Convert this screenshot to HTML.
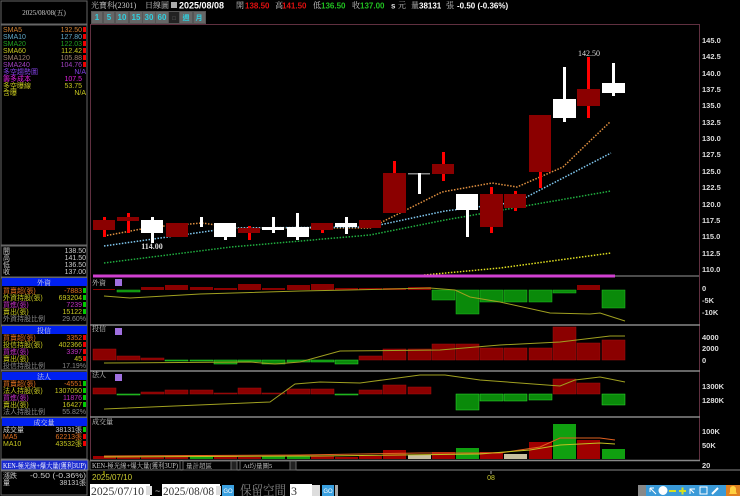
<!DOCTYPE html>
<html><head><meta charset="utf-8"><style>
html,body{margin:0;padding:0;background:#000;width:740px;height:496px;overflow:hidden}
svg{display:block}
text{font-family:"Liberation Sans","Noto Sans CJK TC",sans-serif}
.s{font-family:"Liberation Serif","Noto Serif CJK SC",serif}
</style></head><body>
<svg width="740" height="496" viewBox="0 0 740 496" xmlns="http://www.w3.org/2000/svg">
<rect width="740" height="496" fill="#000"/>
<!-- left panel -->
<rect x="1" y="1" width="86" height="23" fill="#000" stroke="#666"/>
<text x="44" y="15" font-size="7" fill="#ccc" text-anchor="middle" class="s">2025/08/08(五)</text>
<rect x="1" y="25" width="86" height="220" fill="#000" stroke="#666"/>
<g font-size="7" class="s">
<text x="3" y="32" fill="#d08030">SMA5</text><text x="82" y="32" fill="#d08030" text-anchor="end">132.50</text>
<text x="3" y="39" fill="#60a8c8">SMA10</text><text x="82" y="39" fill="#60a8c8" text-anchor="end">127.80</text>
<text x="3" y="46" fill="#20a020">SMA20</text><text x="82" y="46" fill="#20a020" text-anchor="end">122.03</text>
<text x="3" y="53" fill="#c8c820">SMA60</text><text x="82" y="53" fill="#c8c820" text-anchor="end">112.42</text>
<text x="3" y="60" fill="#a08070">SMA120</text><text x="82" y="60" fill="#a08070" text-anchor="end">105.88</text>
<text x="3" y="67" fill="#a040c0">SMA240</text><text x="82" y="67" fill="#a040c0" text-anchor="end">104.76</text>
<text x="3" y="74" fill="#8040e0">多空趨勢圖</text><text x="86" y="74" fill="#8040e0" text-anchor="end">N/A</text>
<text x="3" y="81" fill="#e020e0">籌多成本</text><text x="82" y="81" fill="#e020e0" text-anchor="end">107.5</text>
<text x="3" y="88" fill="#c8c820">多空曝線</text><text x="82" y="88" fill="#c8c820" text-anchor="end">53.75</text>
<text x="3" y="95" fill="#c8c820">含曝</text><text x="86" y="95" fill="#c8c820" text-anchor="end">N/A</text>
</g>
<g fill="#e00"><rect x="83" y="27" width="3" height="5"/><rect x="83" y="34" width="3" height="5"/><rect x="83" y="41" width="3" height="5"/><rect x="83" y="48" width="3" height="5"/><rect x="83" y="55" width="3" height="5"/><rect x="83" y="62" width="3" height="5"/></g>
<rect x="1" y="246" width="86" height="31" fill="#000" stroke="#666"/>
<g font-size="7" class="s" fill="#ccc">
<text x="3" y="253">開</text><text x="86" y="253" text-anchor="end">138.50</text>
<text x="3" y="260">高</text><text x="86" y="260" text-anchor="end">141.50</text>
<text x="3" y="267">低</text><text x="86" y="267" text-anchor="end">136.50</text>
<text x="3" y="274">收</text><text x="86" y="274" text-anchor="end">137.00</text>
</g>
<!-- 外資 -->
<rect x="1" y="278" width="86" height="47" fill="#000" stroke="#666"/>
<rect x="2" y="278" width="85" height="8" fill="#0020f0"/>
<text x="44" y="285" font-size="7" fill="#ddd" text-anchor="middle" class="s">外資</text>
<g font-size="7" class="s">
<text x="3" y="293" fill="#e07020">買賣超(張)</text><text x="82" y="293" fill="#e07020" text-anchor="end">-7883</text>
<text x="3" y="300" fill="#c8c820">外資持股(張)</text><text x="82" y="300" fill="#c8c820" text-anchor="end">693204</text>
<text x="3" y="307" fill="#c030c0">買進(張)</text><text x="82" y="307" fill="#c030c0" text-anchor="end">7239</text>
<text x="3" y="314" fill="#c8c820">賣出(張)</text><text x="82" y="314" fill="#c8c820" text-anchor="end">15122</text>
<text x="3" y="321" fill="#888">外資持股比例</text><text x="86" y="321" fill="#888" text-anchor="end">29.60%</text>
</g>
<!-- 投信 -->
<rect x="1" y="326" width="86" height="44" fill="#000" stroke="#666"/>
<rect x="2" y="326" width="85" height="8" fill="#0020f0"/>
<text x="44" y="333" font-size="7" fill="#ddd" text-anchor="middle" class="s">投信</text>
<g font-size="7" class="s">
<text x="3" y="340" fill="#e07020">買賣超(張)</text><text x="82" y="340" fill="#e07020" text-anchor="end">3352</text>
<text x="3" y="347" fill="#c8c820">投信持股(張)</text><text x="82" y="347" fill="#c8c820" text-anchor="end">402366</text>
<text x="3" y="354" fill="#c030c0">買進(張)</text><text x="82" y="354" fill="#c030c0" text-anchor="end">3397</text>
<text x="3" y="361" fill="#c8c820">賣出(張)</text><text x="82" y="361" fill="#c8c820" text-anchor="end">45</text>
<text x="3" y="368" fill="#888">投信持股比例</text><text x="86" y="368" fill="#888" text-anchor="end">17.19%</text>
</g>
<!-- 法人 -->
<rect x="1" y="371" width="86" height="46" fill="#000" stroke="#666"/>
<rect x="2" y="372" width="85" height="8" fill="#0020f0"/>
<text x="44" y="379" font-size="7" fill="#ddd" text-anchor="middle" class="s">法人</text>
<g font-size="7" class="s">
<text x="3" y="386" fill="#e07020">買賣超(張)</text><text x="82" y="386" fill="#e07020" text-anchor="end">-4551</text>
<text x="3" y="393" fill="#c8c820">法人持股(張)</text><text x="82" y="393" fill="#c8c820" text-anchor="end">1307050</text>
<text x="3" y="400" fill="#c030c0">買進(張)</text><text x="82" y="400" fill="#c030c0" text-anchor="end">11876</text>
<text x="3" y="407" fill="#c8c820">賣出(張)</text><text x="82" y="407" fill="#c8c820" text-anchor="end">16427</text>
<text x="3" y="414" fill="#888">法人持股比例</text><text x="86" y="414" fill="#888" text-anchor="end">55.82%</text>
</g>
<!-- 成交量 -->
<rect x="1" y="418" width="86" height="41" fill="#000" stroke="#666"/>
<rect x="2" y="418" width="85" height="8" fill="#0020f0"/>
<text x="44" y="425" font-size="7" fill="#ddd" text-anchor="middle" class="s">成交量</text>
<g font-size="7" class="s">
<text x="3" y="432" fill="#ccc">成交量</text><text x="82" y="432" fill="#ccc" text-anchor="end">38131張</text>
<text x="3" y="439" fill="#e07020">MA5</text><text x="82" y="439" fill="#e07020" text-anchor="end">62213張</text>
<text x="3" y="446" fill="#c8c820">MA10</text><text x="82" y="446" fill="#c8c820" text-anchor="end">43532張</text>
</g>
<g fill="#0c0"><rect x="83" y="288" width="3" height="5"/><rect x="83" y="295" width="3" height="5"/><rect x="83" y="302" width="3" height="5"/><rect x="83" y="309" width="3" height="5"/><rect x="83" y="381" width="3" height="5"/><rect x="83" y="388" width="3" height="5"/><rect x="83" y="395" width="3" height="5"/><rect x="83" y="402" width="3" height="5"/><rect x="83" y="427" width="3" height="5"/></g>
<g fill="#e00"><rect x="83" y="335" width="3" height="5"/><rect x="83" y="342" width="3" height="5"/><rect x="83" y="349" width="3" height="5"/><rect x="83" y="356" width="3" height="5"/><rect x="83" y="434" width="3" height="5"/><rect x="83" y="441" width="3" height="5"/></g>
<rect x="1" y="460" width="87" height="10" fill="#1a2ad0" stroke="#888"/>
<text x="3" y="468" font-size="7" fill="#fff" class="s" textLength="83" lengthAdjust="spacingAndGlyphs">KEN-極光線+爆大量(獲利3UP)</text>
<rect x="1" y="471" width="86" height="24" fill="#000" stroke="#666"/>
<g font-size="7" class="s" fill="#ccc">
<text x="3" y="478">漲跌</text><text x="86" y="478" text-anchor="end" textLength="56" lengthAdjust="spacingAndGlyphs">-0.50 (-0.36%)</text>
<text x="3" y="485">量</text><text x="86" y="485" text-anchor="end">38131張</text>
</g>

<!-- top bar -->
<g font-size="8">
<text x="91" y="8" fill="#ccc" class="s">光寶科(2301)</text>
<text x="145" y="8" fill="#ccc" class="s">日線圖</text>
<rect x="171" y="2" width="6" height="6" fill="#aaa"/>
<text x="179" y="8.5" fill="#fff" font-weight="bold" font-size="9">2025/08/08</text>
<text x="236" y="8" fill="#ccc" class="s">開</text><text x="245" y="8.5" fill="#e01010" font-weight="bold">138.50</text>
<text x="275" y="8" fill="#ccc" class="s">高</text><text x="282" y="8.5" fill="#e01010" font-weight="bold">141.50</text>
<text x="313" y="8" fill="#ccc" class="s">低</text><text x="321" y="8.5" fill="#20c020" font-weight="bold">136.50</text>
<text x="352" y="8" fill="#ccc" class="s">收</text><text x="360" y="8.5" fill="#20c020" font-weight="bold">137.00</text>
<text x="391" y="8.5" fill="#ddd" font-weight="bold">s</text><text x="398" y="8" fill="#ccc" class="s">元</text>
<text x="411" y="8" fill="#ccc" class="s">量</text><text x="419" y="8.5" fill="#fff" font-weight="bold">38131</text>
<text x="446" y="8" fill="#ccc" class="s">張</text>
<text x="457" y="8.5" fill="#fff" font-weight="bold">-0.50 (-0.36%)</text>
</g>
<rect x="91" y="11" width="115" height="13" fill="#555"/>
<g font-size="8" fill="#30d0e0" font-weight="bold" text-anchor="middle">
<rect x="92" y="12" width="10" height="11" fill="#666"/><text x="97" y="20">1</text>
<rect x="104" y="12" width="10" height="11" fill="#666"/><text x="109" y="20">5</text>
<rect x="116" y="12" width="12" height="11" fill="#666"/><text x="122" y="20">10</text>
<rect x="130" y="12" width="12" height="11" fill="#666"/><text x="136" y="20">15</text>
<rect x="143" y="12" width="12" height="11" fill="#666"/><text x="149" y="20">30</text>
<rect x="156" y="12" width="12" height="11" fill="#666"/><text x="162" y="20">60</text>
<rect x="169" y="12" width="10" height="11" fill="#222"/><text x="174" y="20" fill="#666" font-size="6">□</text>
<rect x="180" y="12" width="12" height="11" fill="#666"/><text x="186" y="20" font-size="7">週</text>
<rect x="194" y="12" width="11" height="11" fill="#666"/><text x="199" y="20" font-size="7">月</text>
</g>

<!-- chart frames -->
<rect x="90.5" y="24.5" width="609" height="436" fill="none" stroke="#603040"/>
<g stroke="#888" stroke-width="1.5">
<line x1="90" y1="325" x2="700" y2="325"/>
<line x1="90" y1="371" x2="700" y2="371"/>
<line x1="90" y1="417" x2="700" y2="417"/>
<line x1="90" y1="460.5" x2="700" y2="460.5"/>
</g>
<line x1="90" y1="470" x2="740" y2="470" stroke="#888"/>

<!-- axis labels -->
<g font-size="7.5" fill="#ddd" font-weight="bold">
<text x="702" y="43">145.0</text><text x="702" y="59">142.5</text><text x="702" y="76">140.0</text><text x="702" y="92">137.5</text><text x="702" y="108">135.0</text><text x="702" y="125">132.5</text><text x="702" y="141">130.0</text><text x="702" y="157">127.5</text><text x="702" y="174">125.0</text><text x="702" y="190">122.5</text><text x="702" y="207">120.0</text><text x="702" y="223">117.5</text><text x="702" y="239">115.0</text><text x="702" y="256">112.5</text><text x="702" y="272">110.0</text>
<text x="702" y="291">0</text><text x="702" y="303">-5K</text><text x="702" y="315">-10K</text>
<text x="702" y="340">4000</text><text x="702" y="351">2000</text><text x="702" y="363">0</text>
<text x="702" y="389">1300K</text><text x="702" y="403">1280K</text>
<text x="702" y="434">100K</text><text x="702" y="448">50K</text><text x="702" y="468">20</text>
</g>

<!-- MA lines -->
<g fill="none" stroke-width="1.5" stroke-dasharray="1.5 1.5">
<polyline stroke="#e09040" points="104,236 152,227 202,223 238,228 370,228 442,192 492,183 517,187 563,167 591,140 610,122"/>
<polyline stroke="#80c8f0" points="104,246 231,228 370,227 445,211 517,202 611,153"/>
<polyline stroke="#20b040" points="104,263 231,247 370,235 445,220 611,191"/>
<polyline stroke="#e0e020" points="424,275 500,268 611,253"/>
</g>
<line x1="93" y1="276" x2="615" y2="276" stroke="#d040d0" stroke-width="3"/>
<line x1="615" y1="276" x2="699" y2="276" stroke="#666" stroke-width="1.5"/>

<!-- candles -->
<g>
<rect x="103" y="217" width="3" height="20" fill="#f00"/><rect x="93" y="220" width="22" height="10" fill="#8b0000"/>
<rect x="127" y="213" width="3" height="20" fill="#f00"/><rect x="117" y="217" width="22" height="4" fill="#8b0000"/>
<rect x="151" y="217" width="3" height="26" fill="#fff"/><rect x="141" y="220" width="22" height="13" fill="#fff"/>
<rect x="166" y="223" width="22" height="14" fill="#8b0000"/>
<rect x="200" y="217" width="3" height="10" fill="#fff"/>
<rect x="224" y="223" width="3" height="17" fill="#fff"/><rect x="214" y="223" width="22" height="14" fill="#fff"/>
<rect x="248" y="226" width="3" height="14" fill="#f00"/><rect x="238" y="228" width="22" height="5" fill="#8b0000"/>
<rect x="272" y="217" width="3" height="16" fill="#fff"/><rect x="262" y="227" width="22" height="3" fill="#fff"/>
<rect x="296" y="213" width="3" height="27" fill="#fff"/><rect x="287" y="227" width="22" height="10" fill="#fff"/>
<rect x="321" y="223" width="3" height="10" fill="#f00"/><rect x="311" y="223" width="22" height="7" fill="#8b0000"/>
<rect x="345" y="217" width="3" height="17" fill="#fff"/><rect x="335" y="223" width="22" height="4" fill="#fff"/>
<rect x="359" y="220" width="22" height="8" fill="#8b0000"/>
<rect x="393" y="161" width="3" height="15" fill="#f00"/><rect x="383" y="173" width="23" height="40" fill="#8b0000"/>
<rect x="408" y="173" width="22" height="1.5" fill="#888"/><rect x="418" y="173" width="3" height="21" fill="#fff"/>
<rect x="442" y="152" width="3" height="29" fill="#f00"/><rect x="432" y="164" width="22" height="10" fill="#8b0000"/>
<rect x="466" y="194" width="3" height="43" fill="#fff"/><rect x="456" y="194" width="22" height="16" fill="#fff"/>
<rect x="490" y="187" width="3" height="46" fill="#f00"/><rect x="480" y="194" width="23" height="33" fill="#8b0000"/>
<rect x="514" y="191" width="3" height="20" fill="#f00"/><rect x="504" y="194" width="22" height="14" fill="#8b0000"/>
<rect x="539" y="170" width="3" height="18" fill="#f00"/><rect x="529" y="115" width="22" height="57" fill="#8b0000"/>
<rect x="563" y="67" width="3" height="55" fill="#fff"/><rect x="553" y="99" width="23" height="19" fill="#fff"/>
<rect x="587" y="57" width="3" height="61" fill="#f00"/><rect x="577" y="89" width="23" height="17" fill="#8b0000"/>
<rect x="612" y="63" width="3" height="33" fill="#fff"/><rect x="602" y="83" width="23" height="10" fill="#fff"/>
</g>
<text x="152" y="249" font-size="8" fill="#ddd" text-anchor="middle" font-weight="bold" class="s">114.00</text>
<text x="589" y="56" font-size="8" fill="#ddd" text-anchor="middle" class="s">142.50</text>

<!-- 外資 panel -->
<text x="92" y="285" font-size="7" fill="#ccc" class="s">外資</text>
<rect x="115" y="279" width="7" height="7" fill="#a070e0"/>
<g fill="#8b0000">
<rect x="93" y="289" width="22" height="1"/><rect x="141" y="287" width="23" height="3"/><rect x="165" y="285" width="23" height="5"/><rect x="190" y="287" width="23" height="3"/><rect x="214" y="288" width="23" height="2"/><rect x="238" y="284" width="23" height="6"/><rect x="262" y="288" width="23" height="2"/><rect x="287" y="285" width="23" height="5"/><rect x="311" y="284" width="23" height="6"/><rect x="335" y="288" width="23" height="2"/><rect x="359" y="288" width="23" height="2"/><rect x="383" y="288" width="23" height="2"/><rect x="408" y="287" width="23" height="3"/><rect x="577" y="285" width="23" height="5"/>
</g>
<g fill="#0a8a0a" stroke="#20c020" stroke-width="0.5">
<rect x="117" y="290" width="23" height="2"/><rect x="432" y="290" width="23" height="10"/><rect x="456" y="290" width="23" height="24"/><rect x="480" y="290" width="23" height="12"/><rect x="504" y="290" width="23" height="12"/><rect x="529" y="290" width="23" height="12"/><rect x="553" y="290" width="23" height="3"/><rect x="602" y="290" width="23" height="18"/>
</g>
<polyline fill="none" stroke="#a0a020" points="104,296 130,298 200,294 300,291 350,290 430,288 455,290 470,297 500,302 550,313 590,314 600,313 625,321"/>

<!-- 投信 panel -->
<text x="92" y="331" font-size="7" fill="#ccc" class="s">投信</text>
<rect x="115" y="328" width="7" height="7" fill="#a070e0"/>
<g fill="#8b0000" stroke="#a01010" stroke-width="0.5">
<rect x="93" y="349" width="23" height="11"/><rect x="117" y="356" width="23" height="4"/><rect x="141" y="358" width="23" height="2"/><rect x="359" y="356" width="23" height="4"/><rect x="383" y="349" width="23" height="11"/><rect x="408" y="349" width="23" height="11"/><rect x="432" y="344" width="23" height="16"/><rect x="456" y="344" width="23" height="16"/><rect x="480" y="348" width="23" height="12"/><rect x="504" y="348" width="23" height="12"/><rect x="529" y="348" width="23" height="12"/><rect x="553" y="327" width="23" height="33"/><rect x="577" y="343" width="23" height="17"/><rect x="602" y="340" width="23" height="20"/>
</g>
<g fill="#0a8a0a" stroke="#30e030" stroke-width="0.5">
<rect x="165" y="360" width="23" height="1"/><rect x="190" y="360" width="23" height="1"/><rect x="214" y="360" width="23" height="4"/><rect x="238" y="360" width="23" height="1.5"/><rect x="262" y="360" width="23" height="4"/><rect x="287" y="360" width="23" height="2"/><rect x="311" y="360" width="23" height="2"/><rect x="335" y="360" width="23" height="4"/>
</g>
<polyline fill="none" stroke="#a0a020" points="104,363 250,362 275,364 300,362 340,351 440,350 500,345 560,342 610,336 625,336"/>

<!-- 法人 panel -->
<text x="92" y="377" font-size="7" fill="#ccc" class="s">法人</text>
<rect x="115" y="374" width="7" height="7" fill="#a070e0"/>
<g fill="#8b0000" stroke="#a01010" stroke-width="0.5">
<rect x="93" y="388" width="23" height="6"/><rect x="141" y="392" width="23" height="2"/><rect x="165" y="390" width="23" height="4"/><rect x="190" y="390" width="23" height="4"/><rect x="214" y="393" width="23" height="1"/><rect x="238" y="388" width="23" height="6"/><rect x="262" y="393" width="23" height="1"/><rect x="287" y="389" width="23" height="5"/><rect x="311" y="389" width="23" height="5"/><rect x="359" y="390" width="23" height="4"/><rect x="383" y="385" width="23" height="9"/><rect x="408" y="387" width="23" height="7"/><rect x="553" y="379" width="23" height="15"/><rect x="577" y="383" width="23" height="11"/>
</g>
<g fill="#0a8a0a" stroke="#30e030" stroke-width="0.5">
<rect x="117" y="394" width="23" height="1"/><rect x="335" y="394" width="23" height="1"/><rect x="456" y="394" width="23" height="16"/><rect x="480" y="394" width="23" height="7"/><rect x="504" y="394" width="23" height="7"/><rect x="529" y="394" width="23" height="6"/><rect x="602" y="394" width="23" height="11"/>
</g>
<polyline fill="none" stroke="#a0a020" points="104,409 270,402 295,384 320,382 360,383 420,375 445,375 480,380 560,386 575,380 600,377 625,382"/>

<!-- volume -->
<text x="92" y="424" font-size="7" fill="#ccc" class="s">成交量</text>
<g fill="#a00000">
<rect x="93" y="456" width="23" height="3"/><rect x="117" y="456" width="23" height="3"/><rect x="141" y="457" width="23" height="2"/><rect x="165" y="456" width="23" height="3"/><rect x="214" y="456" width="23" height="3"/><rect x="238" y="457" width="23" height="2"/><rect x="311" y="456" width="23" height="3"/><rect x="335" y="457" width="23" height="2"/><rect x="359" y="456" width="23" height="3"/><rect x="383" y="450" width="23" height="9"/><rect x="432" y="452" width="23" height="7"/><rect x="480" y="452" width="23" height="7"/><rect x="529" y="442" width="23" height="17"/><rect x="577" y="440" width="23" height="19"/>
</g>
<g fill="#10a010">
<rect x="190" y="456" width="23" height="3"/><rect x="262" y="456" width="23" height="3"/><rect x="287" y="456" width="23" height="3"/><rect x="456" y="448" width="23" height="11"/><rect x="553" y="424" width="23" height="35"/><rect x="602" y="449" width="23" height="10"/>
</g>
<g fill="#c8c0a0"><rect x="408" y="455" width="23" height="4"/><rect x="504" y="454" width="23" height="5"/></g>
<polyline fill="none" stroke="#e06020" points="104,456 300,455 420,453 500,453 540,447 560,438 600,438 615,440"/>
<polyline fill="none" stroke="#c0c020" points="104,457 320,456 480,454 530,450 560,445 600,443 615,444"/>

<!-- bottom rows -->
<rect x="90" y="461" width="90" height="9" fill="#000" stroke="#666"/>
<text x="92" y="468" font-size="7" fill="#ccc" class="s" textLength="86" lengthAdjust="spacingAndGlyphs">KEN-極光線+爆大量(獲利3UP)</text>
<rect x="183" y="461" width="48" height="9" fill="#000" stroke="#666"/><text x="186" y="468" font-size="6.5" fill="#ccc" class="s">量計超區</text>
<rect x="231" y="461" width="6" height="9" fill="#222" stroke="#666"/>
<rect x="240" y="461" width="50" height="9" fill="#000" stroke="#666"/><text x="243" y="468" font-size="6.5" fill="#ccc" class="s">At均量圖5</text>
<rect x="290" y="461" width="6" height="9" fill="#222" stroke="#666"/>
<line x1="104" y1="471" x2="104" y2="475" stroke="#cc0"/>
<text x="92" y="480" font-size="8" fill="#cccc30">2025/07/10</text>
<line x1="491" y1="471" x2="491" y2="474" stroke="#aaa"/>
<text x="491" y="480" font-size="7" fill="#cccc30" text-anchor="middle">08</text>

<rect x="90" y="484" width="60" height="12" fill="#fff"/>
<text x="91" y="495" font-size="12" fill="#333" class="s" textLength="53" lengthAdjust="spacingAndGlyphs">2025/07/10</text>
<rect x="146" y="486" width="6" height="9" fill="#ddd"/>
<text x="155" y="494" font-size="9" fill="#ccc">~</text>
<rect x="162" y="484" width="58" height="12" fill="#fff"/>
<text x="163" y="495" font-size="12" fill="#333" class="s" textLength="51" lengthAdjust="spacingAndGlyphs">2025/08/08</text>
<rect x="216" y="486" width="5" height="9" fill="#ddd"/>
<rect x="222" y="485" width="12" height="11" fill="#3aa0e0"/><text x="228" y="493" font-size="6" fill="#fff" text-anchor="middle">GO</text>
<text x="240" y="495" font-size="13" fill="#888" class="s" textLength="46" lengthAdjust="spacingAndGlyphs">保留空間</text>
<rect x="290" y="484" width="22" height="12" fill="#fff"/><text x="291" y="495" font-size="12" fill="#333" class="s">3</text>
<rect x="312" y="485" width="8" height="11" fill="#ddd"/>
<rect x="322" y="485" width="12" height="11" fill="#3aa0e0"/><text x="328" y="493" font-size="6" fill="#fff" text-anchor="middle">GO</text>
<rect x="335" y="485" width="3" height="11" fill="#aaa"/>
<!-- toolbar -->
<rect x="638" y="485" width="8" height="11" fill="#888"/>
<rect x="646" y="485" width="94" height="11" fill="#3a9ad8"/>
<g fill="#fff" stroke="#fff" stroke-width="1">
<path d="M650 488 L656 494 M650 488 L650 492 M650 488 L654 488" fill="none"/>
<circle cx="663" cy="490.5" r="4"/>
<rect x="669" y="490" width="7" height="2" stroke="none" fill="#d8e020"/>
<path d="M679 491 h7 M682.5 487.5 v7" stroke="#d8e020" stroke-width="2"/>
<path d="M690 494 v-5 h5 M690 489 l4 4" fill="none"/>
<rect x="700" y="487" width="7" height="7" fill="none"/>
<path d="M712 494 l6 -6" stroke-width="2"/>
</g>
<rect x="726" y="485" width="14" height="11" fill="#e08020"/>
<path d="M729 494 h8 l-1 -2 v-3 a3 3 0 0 0 -6 0 v3 z" fill="#ffd040"/>
</svg>
</body></html>
